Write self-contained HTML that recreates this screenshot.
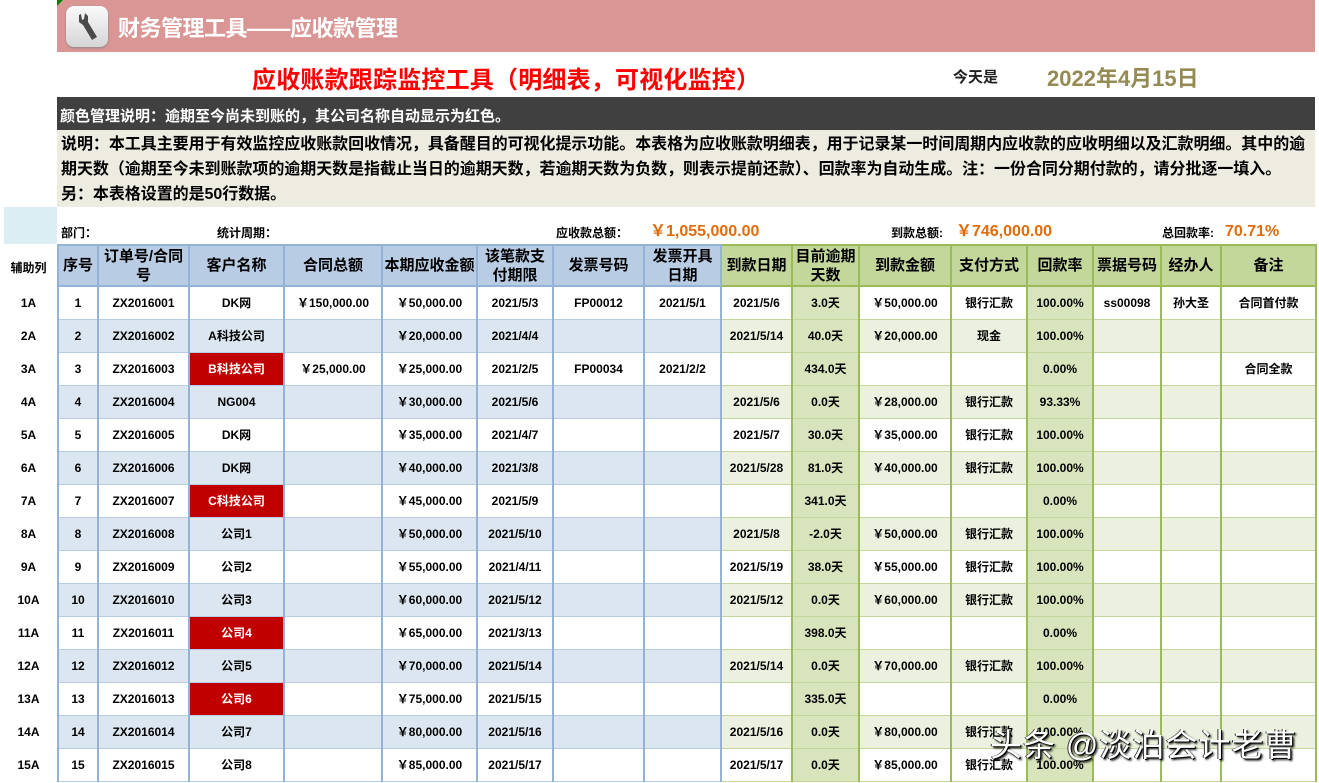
<!DOCTYPE html>
<html><head><meta charset="utf-8">
<style>
*{margin:0;padding:0;box-sizing:border-box}
body{width:1319px;height:783px;overflow:hidden;background:#fff;position:relative;font-family:"Liberation Sans","Noto Sans CJK SC",sans-serif;color:#000}
.abs{position:absolute;white-space:nowrap}
#banner{left:57px;top:0;width:1258px;height:52px;background:#da9694}
#icon{left:66px;top:6px;width:42px;height:41px;border-radius:8px;background:linear-gradient(#fafafa,#d6d6d6);box-shadow:0 1px 2px #888}
#btitle{left:118px;top:11px;font-size:22px;color:#fff;font-weight:bold;letter-spacing:-0.5px}
#title{left:252px;top:60px;font-size:24px;color:#ff0000;font-weight:bold;letter-spacing:0.2px}
#today{left:953px;top:66px;font-size:15px;font-weight:bold;color:#222}
#date{left:1047px;top:61px;font-size:22px;font-weight:bold;color:#948a54}
#dark{left:57px;top:97px;width:1258px;height:33px;background:#404040;color:#fff;font-size:15px;font-weight:bold;padding:8px 0 0 3px}
#desc{left:57px;top:130px;width:1258px;height:77px;background:#eeece1;font-size:16px;font-weight:bold;line-height:25px;padding:2px 0 0 4px;letter-spacing:-0.05px}
#auxbg{left:4px;top:207px;width:53px;height:37px;background:#daeef3}
.lab{font-size:12px;font-weight:bold;top:226px;line-height:14px}
.or{color:#e26b0a;font-weight:bold;font-size:16px;top:222px;line-height:20px}
table{position:absolute;left:57px;top:244px;border-collapse:collapse;table-layout:fixed}
td{height:33px;text-align:center;font-size:12px;font-weight:bold;border-left:2px solid #95b3d7;border-right:2px solid #95b3d7;border-bottom:1px solid #b8cce4;white-space:nowrap;overflow:hidden;padding:0}
td.g{border-left:2px solid #9bbb59;border-right:2px solid #9bbb59;border-bottom:1px solid #c4d79b}
tr.h td{height:41px;background:#b8cce4;font-size:15px;line-height:19px;white-space:normal;border-bottom:2px solid #95b3d7;border-top:2px solid #95b3d7}
tr.h td.g{background:#c4d79b;border-bottom:2px solid #9bbb59;border-top:2px solid #9bbb59}
tr.e td{background:#dce6f1}
tr.e td.g{background:#ebf1de}
tr td.d,tr.e td.d{background:#d8e4bc}
td.r{background:#c00000!important;color:#fff}
.aux{position:absolute;left:0;width:57px;text-align:center;font-size:12px;font-weight:bold}
#wm{left:990px;top:720px;font-size:32px;color:#fff;text-shadow:1px 1px 0 #000,-1px 0 0 #333,2px 2px 2px #000;letter-spacing:1px}
</style></head><body>
<div class="abs" id="banner"></div>
<div class="abs" style="left:57px;top:0;width:0;height:0;border-top:6px solid #008000;border-right:6px solid transparent"></div>
<div class="abs" id="icon"><svg width="42" height="41" viewBox="0 0 42 41"><path d="M13 9 L13 16 L17 19 L26 34 L31 31 L22 16 L22 10 L19 7 L18 13 L16 14 L15 8 Z" fill="#4a4a4a"/></svg></div>
<div class="abs" id="btitle">财务管理工具——应收款管理</div>
<div class="abs" id="title">应收账款跟踪监控工具（明细表，可视化监控）</div>
<div class="abs" id="today">今天是</div>
<div class="abs" id="date">2022年4月15日</div>
<div class="abs" id="dark">颜色管理说明：逾期至今尚未到账的，其公司名称自动显示为红色。</div>
<div class="abs" id="desc">说明：本工具主要用于有效监控应收账款回收情况，具备醒目的可视化提示功能。本表格为应收账款明细表，用于记录某一时间周期内应收款的应收明细以及汇款明细。其中的逾<br>期天数（逾期至今未到账款项的逾期天数是指截止当日的逾期天数，若逾期天数为负数，则表示提前还款）、回款率为自动生成。注：一份合同分期付款的，请分批逐一填入。<br>另：本表格设置的是50行数据。</div>
<div class="abs" id="auxbg"></div>
<div class="abs lab" style="left:61px">部门：</div>
<div class="abs lab" style="left:217px">统计周期：</div>
<div class="abs lab" style="left:556px">应收款总额：</div>
<div class="abs or" style="left:650px">￥1,055,000.00</div>
<div class="abs lab" style="left:891px">到款总额:</div>
<div class="abs or" style="left:956px">￥746,000.00</div>
<div class="abs lab" style="left:1162px">总回款率:</div>
<div class="abs or" style="left:1225px">70.71%</div>

<div class="aux" style="top:259px">辅助列</div>
<div class="aux" style="top:296px">1A</div><div class="aux" style="top:329px">2A</div><div class="aux" style="top:362px">3A</div><div class="aux" style="top:395px">4A</div><div class="aux" style="top:428px">5A</div><div class="aux" style="top:461px">6A</div><div class="aux" style="top:494px">7A</div><div class="aux" style="top:527px">8A</div><div class="aux" style="top:560px">9A</div><div class="aux" style="top:593px">10A</div><div class="aux" style="top:626px">11A</div><div class="aux" style="top:659px">12A</div><div class="aux" style="top:692px">13A</div><div class="aux" style="top:725px">14A</div><div class="aux" style="top:758px">15A</div>

<table>
<colgroup><col style="width:40px"><col style="width:91px"><col style="width:95px"><col style="width:98px"><col style="width:95px"><col style="width:76px"><col style="width:91px"><col style="width:77px"><col style="width:71px"><col style="width:67px"><col style="width:92px"><col style="width:76px"><col style="width:66px"><col style="width:68px"><col style="width:60px"><col style="width:95px"></colgroup>
<tr class="h"><td>序号</td><td>订单号/合同<br>号</td><td>客户名称</td><td>合同总额</td><td>本期应收金额</td><td>该笔款支<br>付期限</td><td>发票号码</td><td>发票开具<br>日期</td><td class="g">到款日期</td><td class="g">目前逾期<br>天数</td><td class="g">到款金额</td><td class="g">支付方式</td><td class="g">回款率</td><td class="g">票据号码</td><td class="g">经办人</td><td class="g">备注</td></tr>
<tr><td>1</td><td>ZX2016001</td><td>DK网</td><td>￥150,000.00</td><td>￥50,000.00</td><td>2021/5/3</td><td>FP00012</td><td>2021/5/1</td><td class="g">2021/5/6</td><td class="g d">3.0天</td><td class="g">￥50,000.00</td><td class="g">银行汇款</td><td class="g d">100.00%</td><td class="g">ss00098</td><td class="g">孙大圣</td><td class="g">合同首付款</td></tr>
<tr class="e"><td>2</td><td>ZX2016002</td><td>A科技公司</td><td></td><td>￥20,000.00</td><td>2021/4/4</td><td></td><td></td><td class="g">2021/5/14</td><td class="g d">40.0天</td><td class="g">￥20,000.00</td><td class="g">现金</td><td class="g d">100.00%</td><td class="g"></td><td class="g"></td><td class="g"></td></tr>
<tr><td>3</td><td>ZX2016003</td><td class="r">B科技公司</td><td>￥25,000.00</td><td>￥25,000.00</td><td>2021/2/5</td><td>FP00034</td><td>2021/2/2</td><td class="g"></td><td class="g d">434.0天</td><td class="g"></td><td class="g"></td><td class="g d">0.00%</td><td class="g"></td><td class="g"></td><td class="g">合同全款</td></tr>
<tr class="e"><td>4</td><td>ZX2016004</td><td>NG004</td><td></td><td>￥30,000.00</td><td>2021/5/6</td><td></td><td></td><td class="g">2021/5/6</td><td class="g d">0.0天</td><td class="g">￥28,000.00</td><td class="g">银行汇款</td><td class="g d">93.33%</td><td class="g"></td><td class="g"></td><td class="g"></td></tr>
<tr><td>5</td><td>ZX2016005</td><td>DK网</td><td></td><td>￥35,000.00</td><td>2021/4/7</td><td></td><td></td><td class="g">2021/5/7</td><td class="g d">30.0天</td><td class="g">￥35,000.00</td><td class="g">银行汇款</td><td class="g d">100.00%</td><td class="g"></td><td class="g"></td><td class="g"></td></tr>
<tr class="e"><td>6</td><td>ZX2016006</td><td>DK网</td><td></td><td>￥40,000.00</td><td>2021/3/8</td><td></td><td></td><td class="g">2021/5/28</td><td class="g d">81.0天</td><td class="g">￥40,000.00</td><td class="g">银行汇款</td><td class="g d">100.00%</td><td class="g"></td><td class="g"></td><td class="g"></td></tr>
<tr><td>7</td><td>ZX2016007</td><td class="r">C科技公司</td><td></td><td>￥45,000.00</td><td>2021/5/9</td><td></td><td></td><td class="g"></td><td class="g d">341.0天</td><td class="g"></td><td class="g"></td><td class="g d">0.00%</td><td class="g"></td><td class="g"></td><td class="g"></td></tr>
<tr class="e"><td>8</td><td>ZX2016008</td><td>公司1</td><td></td><td>￥50,000.00</td><td>2021/5/10</td><td></td><td></td><td class="g">2021/5/8</td><td class="g d">-2.0天</td><td class="g">￥50,000.00</td><td class="g">银行汇款</td><td class="g d">100.00%</td><td class="g"></td><td class="g"></td><td class="g"></td></tr>
<tr><td>9</td><td>ZX2016009</td><td>公司2</td><td></td><td>￥55,000.00</td><td>2021/4/11</td><td></td><td></td><td class="g">2021/5/19</td><td class="g d">38.0天</td><td class="g">￥55,000.00</td><td class="g">银行汇款</td><td class="g d">100.00%</td><td class="g"></td><td class="g"></td><td class="g"></td></tr>
<tr class="e"><td>10</td><td>ZX2016010</td><td>公司3</td><td></td><td>￥60,000.00</td><td>2021/5/12</td><td></td><td></td><td class="g">2021/5/12</td><td class="g d">0.0天</td><td class="g">￥60,000.00</td><td class="g">银行汇款</td><td class="g d">100.00%</td><td class="g"></td><td class="g"></td><td class="g"></td></tr>
<tr><td>11</td><td>ZX2016011</td><td class="r">公司4</td><td></td><td>￥65,000.00</td><td>2021/3/13</td><td></td><td></td><td class="g"></td><td class="g d">398.0天</td><td class="g"></td><td class="g"></td><td class="g d">0.00%</td><td class="g"></td><td class="g"></td><td class="g"></td></tr>
<tr class="e"><td>12</td><td>ZX2016012</td><td>公司5</td><td></td><td>￥70,000.00</td><td>2021/5/14</td><td></td><td></td><td class="g">2021/5/14</td><td class="g d">0.0天</td><td class="g">￥70,000.00</td><td class="g">银行汇款</td><td class="g d">100.00%</td><td class="g"></td><td class="g"></td><td class="g"></td></tr>
<tr><td>13</td><td>ZX2016013</td><td class="r">公司6</td><td></td><td>￥75,000.00</td><td>2021/5/15</td><td></td><td></td><td class="g"></td><td class="g d">335.0天</td><td class="g"></td><td class="g"></td><td class="g d">0.00%</td><td class="g"></td><td class="g"></td><td class="g"></td></tr>
<tr class="e"><td>14</td><td>ZX2016014</td><td>公司7</td><td></td><td>￥80,000.00</td><td>2021/5/16</td><td></td><td></td><td class="g">2021/5/16</td><td class="g d">0.0天</td><td class="g">￥80,000.00</td><td class="g">银行汇款</td><td class="g d">100.00%</td><td class="g"></td><td class="g"></td><td class="g"></td></tr>
<tr><td>15</td><td>ZX2016015</td><td>公司8</td><td></td><td>￥85,000.00</td><td>2021/5/17</td><td></td><td></td><td class="g">2021/5/17</td><td class="g d">0.0天</td><td class="g">￥85,000.00</td><td class="g">银行汇款</td><td class="g d">100.00%</td><td class="g"></td><td class="g"></td><td class="g"></td></tr>
</table>
<div class="abs" id="wm">头条 @淡泊会计老曹</div>
</body></html>
